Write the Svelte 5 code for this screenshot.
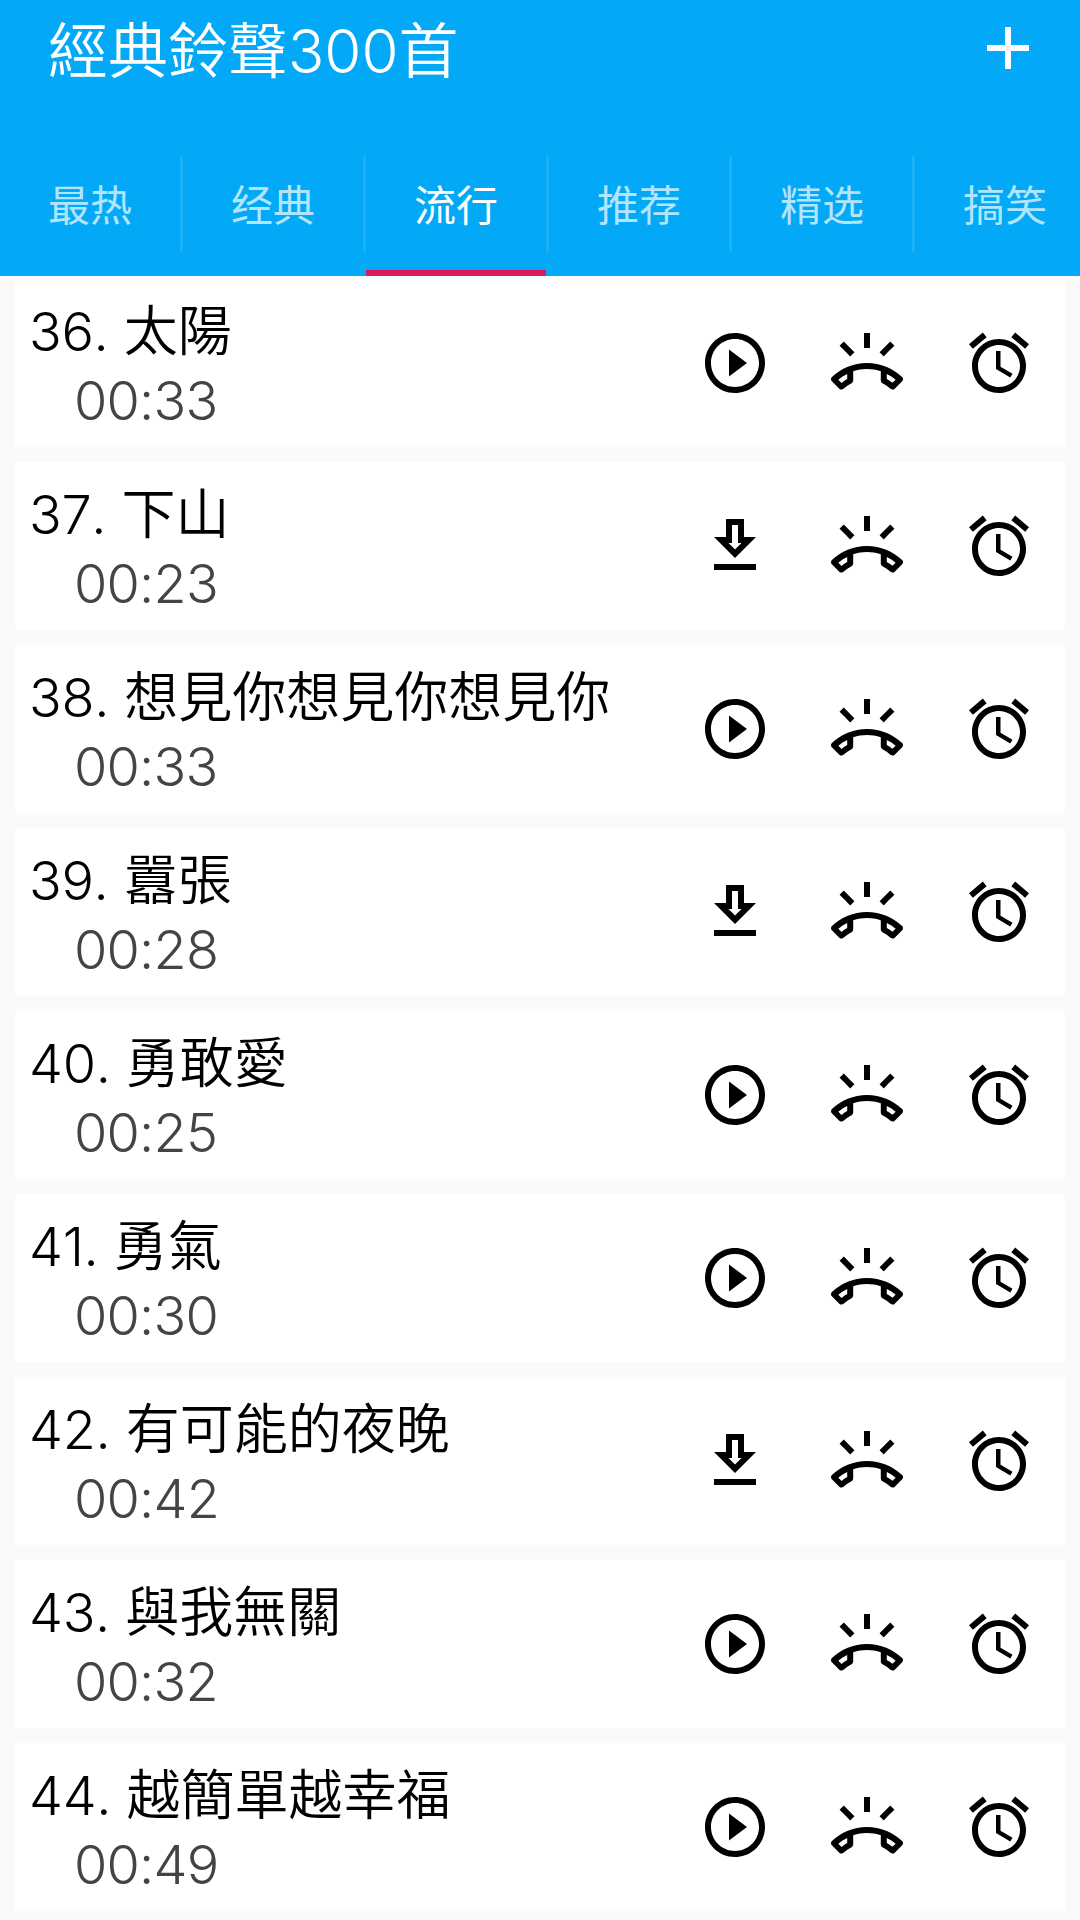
<script>
  const tabs = ['最热', '经典', '流行', '推荐', '精选', '搞笑'];
  let activeTab = $state(2);

  const songs = [
    { id: 36, name: '太陽', time: '00:33', saved: true },
    { id: 37, name: '下山', time: '00:23', saved: false },
    { id: 38, name: '想見你想見你想見你', time: '00:33', saved: true },
    { id: 39, name: '囂張', time: '00:28', saved: false },
    { id: 40, name: '勇敢愛', time: '00:25', saved: true },
    { id: 41, name: '勇氣', time: '00:30', saved: true },
    { id: 42, name: '有可能的夜晚', time: '00:42', saved: false },
    { id: 43, name: '與我無關', time: '00:32', saved: true },
    { id: 44, name: '越簡單越幸福', time: '00:49', saved: true }
  ];

  const icons = {
    add: 'M19 13h-6v6h-2v-6H5v-2h6V5h2v6h6z',
    play: 'M10 16.5l6-4.5-6-4.5v9zM12 2C6.48 2 2 6.48 2 12s4.48 10 10 10 10-4.48 10-10S17.52 2 12 2zm0 18c-4.41 0-8-3.59-8-8s3.59-8 8-8 8 3.59 8 8-3.59 8-8 8z',
    download: 'M19 9h-4V3H9v6H5l7 7 7-7zm-8 2V5h2v6h1.17L12 13.17 9.83 11H11zM5 18h14v2H5z',
    ring: 'M23.71 16.67C20.66 13.78 16.54 12 12 12S3.34 13.78.29 16.67c-.18.18-.29.43-.29.71s.11.53.29.71l2.48 2.48c.18.18.43.29.71.29.27 0 .52-.1.7-.28.79-.74 1.69-1.36 2.66-1.85.33-.16.56-.51.56-.9v-3.1C8.85 14.25 10.4 14 12 14s3.15.25 4.6.73v3.1c0 .4.23.74.56.9.98.49 1.88 1.11 2.67 1.85.18.17.43.28.7.28.28 0 .53-.11.71-.29l2.48-2.48c.18-.18.29-.43.29-.71s-.12-.53-.3-.71zM5.4 17.36c-.66.37-1.29.8-1.89 1.28l-1.07-1.07c.91-.75 1.9-1.38 2.96-1.88v1.67zm15.08 1.26c-.6-.48-1.23-.91-1.89-1.28V15.7c1.07.5 2.06 1.13 2.96 1.86l-1.07 1.06zM21.16 6.26l-1.41-1.41-3.56 3.55 1.41 1.41s3.45-3.52 3.56-3.55zM13 2h-2v5h2V2zM6.4 9.81L7.81 8.4 4.26 4.84 2.84 6.26c.11.03 3.56 3.55 3.56 3.55z',
    alarm: 'M22 5.72l-4.6-3.86-1.29 1.53 4.6 3.86L22 5.72zM7.88 3.39L6.6 1.86 2 5.71l1.29 1.53 4.59-3.85zM12.5 8H11v6l4.75 2.85.75-1.23-4-2.37V8zM12 4c-4.97 0-9 4.03-9 9s4.02 9 9 9 9-4.03 9-9-4.03-9-9-9zm0 16c-3.87 0-7-3.13-7-7s3.13-7 7-7 7 3.13 7 7-3.13 7-7 7z'
  };
</script>

{#snippet icon(name)}
  <svg class="icon" viewBox="0 0 24 24" aria-hidden="true"><path d={icons[name]} /></svg>
{/snippet}

<div class="app">
  <header>
    <div class="toolbar">
      <h1>經典鈴聲300首</h1>
      <button type="button" class="add" aria-label="Add">{@render icon('add')}</button>
    </div>
    <nav>
      {#each tabs as tab, i}
        <button type="button" class="tab" class:active={i === activeTab} onclick={() => (activeTab = i)}>
          {tab}
        </button>
        <span class="divider"></span>
      {/each}
    </nav>
  </header>

  <main>
    {#each songs as song (song.id)}
      <article class="song">
        <div class="info">
          <div class="name"><span class="number">{song.id}.</span> {song.name}</div>
          <div class="time">{song.time}</div>
        </div>
        <button type="button" class="action" aria-label={song.saved ? 'Play' : 'Download'}>
          {@render icon(song.saved ? 'play' : 'download')}
        </button>
        <button type="button" class="action" aria-label="Set as ringtone">{@render icon('ring')}</button>
        <button type="button" class="action" aria-label="Set as alarm">{@render icon('alarm')}</button>
      </article>
    {/each}
  </main>
</div>

<style>
  :global(body) {
    margin: 0;
    background: #fafafa;
  }

  .app {
    width: 1080px;
    height: 1920px;
    overflow: hidden;
    background: #fafafa;
    font-family: Inter, 'Noto Sans CJK TC', sans-serif;
  }

  button {
    border: none;
    background: none;
    padding: 0;
    font: inherit;
    color: inherit;
    cursor: pointer;
  }

  .icon {
    display: block;
    width: 72px;
    height: 72px;
    fill: currentColor;
  }

  header {
    display: flex;
    flex-direction: column;
    height: 276px;
    background: #03a9f6;
    color: #fff;
  }

  .toolbar {
    display: flex;
    justify-content: space-between;
    height: 132px;
    padding: 0 36px 0 48px;
  }

  h1 {
    margin: 0;
    font-size: 60px;
    font-weight: 360;
    line-height: 102px;
  }

  .add {
    height: 72px;
    margin-top: 12px;
  }

  nav {
    display: flex;
    align-items: center;
    height: 144px;
    overflow: hidden;
  }

  .tab {
    flex: none;
    box-sizing: border-box;
    width: 180px;
    height: 144px;
    padding-top: 3px;
    border-bottom: 6px solid transparent;
    font-family: 'Noto Sans CJK SC', sans-serif;
    font-size: 42px;
    font-weight: 400;
    color: #b0e5fd;
  }

  .tab.active {
    color: #fff;
    border-bottom-color: #d81b60;
  }

  .divider {
    flex: none;
    width: 3px;
    height: 96px;
    background: #1cb2f7;
  }

  main {
    display: flex;
    flex-direction: column;
    gap: 15px;
    padding: 3px 15px 0;
  }

  .song {
    display: flex;
    align-items: center;
    height: 168px;
    background: #fff;
    color: #000;
  }

  .info {
    flex: 1;
    padding: 6px 0 0 14px;
    font-size: 54px;
    font-weight: 350;
    line-height: 69px;
    white-space: nowrap;
  }

  .number {
    font-weight: 300;
    font-kerning: none;
    letter-spacing: -0.3px;
  }

  .time {
    padding-left: 45px;
    font-weight: 300;
    letter-spacing: -0.8px;
    color: #444;
  }

  .action {
    display: flex;
    align-items: center;
    justify-content: center;
    width: 132px;
    height: 132px;
  }
</style>
